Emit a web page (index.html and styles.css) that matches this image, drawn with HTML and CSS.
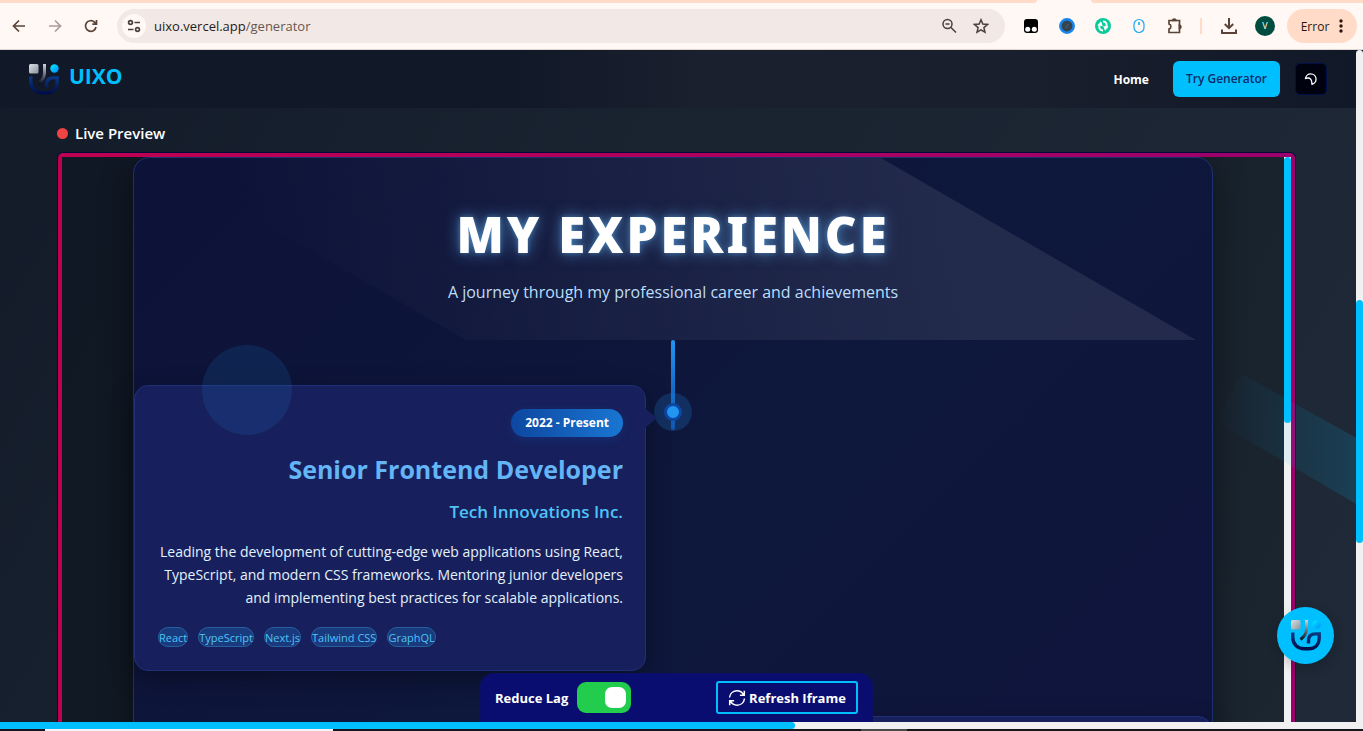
FILE: index.html
```html
<!DOCTYPE html>
<html lang="en">
<head>
<meta charset="utf-8">
<title>UIXO Generator</title>
<link rel="stylesheet" href="styles.css">
</head>
<body>
<svg class="defs" aria-hidden="true">
  <defs>
    <linearGradient id="silver" x1="0" y1="0" x2="1" y2="1"><stop offset="0" stop-color="#dce0e4"/><stop offset="1" stop-color="#8b959e"/></linearGradient>
    <linearGradient id="stem" gradientUnits="userSpaceOnUse" x1="16" y1="0" x2="11" y2="20"><stop offset="0" stop-color="#d0d5da"/><stop offset="1" stop-color="#070d22"/></linearGradient>
    <linearGradient id="dot" x1="0" y1="0" x2="1" y2="1"><stop offset="0" stop-color="#00f0ff"/><stop offset="1" stop-color="#0088ff"/></linearGradient>
    <linearGradient id="cup" gradientUnits="userSpaceOnUse" x1="0" y1="12" x2="0" y2="30"><stop offset="0" stop-color="#0b3a86"/><stop offset="1" stop-color="#000b45"/></linearGradient>
    <symbol id="logo" viewBox="0 0 30 31">
      <rect width="9.5" height="9.5" rx="1.5" fill="url(#silver)"/>
      <path d="M15.5 0v9c0 4-2 7.500-6 10.500" fill="none" stroke="url(#stem)" stroke-width="3"/>
      <circle cx="25.500" cy="4.500" r="4.200" fill="url(#dot)"/>
      <path d="M1.800 12.500v5c0 7 5 11.300 11.500 11.300h4c7 0 10.900-4.500 10.900-11v-3.900h-3.700c-4.800 0-7 2.500-7 6.600v3" fill="none" stroke="url(#cup)" stroke-width="3.400"/>
    </symbol>
  </defs>
</svg>

<header class="browser">
  <div class="tabs"><span class="tabs-left"></span><span class="tabs-right"></span></div>
  <div class="toolbar">
    <button class="tool" aria-label="Back"><svg width="16" height="16" viewBox="0 0 16 16"><path d="M14 8H3M8 2.500 2.500 8 8 13.500"/></svg></button>
    <button class="tool faded" aria-label="Forward"><svg width="16" height="16" viewBox="0 0 16 16"><path d="M2 8h11M8 2.500 13.500 8 8 13.500"/></svg></button>
    <button class="tool" aria-label="Reload"><svg width="16" height="16" viewBox="0 0 16 16"><path d="M13 9a5.300 5.300 0 1 1-1.500-4.800L13.300 6M13.500 2v4.200H9.300"/></svg></button>
    <div class="address">
      <button class="site" aria-label="Site information"><svg width="14" height="14" viewBox="0 0 14 14"><circle cx="3.500" cy="3.500" r="1.900"/><path d="M7.500 3.500H13M1 10.500h5.500"/><circle cx="10.500" cy="10.500" r="1.900"/></svg></button>
      <span class="url">uixo.vercel.app<span class="path">/generator</span></span>
      <button class="inner" aria-label="Zoom"><svg width="16" height="16" viewBox="0 0 16 16"><circle cx="6.500" cy="6" r="4.500"/><path d="M10 9.500l5 5M4.500 6h4"/></svg></button>
      <button class="inner" aria-label="Bookmark"><svg width="16" height="16" viewBox="0 0 16 16"><path d="M8 1.800l1.800 4.300 4.700.4-3.600 3.100 1.100 4.600L8 11.800l-4 2.400 1.100-4.600L1.500 6.500l4.700-.4z"/></svg></button>
    </div>
    <button class="tool" aria-label="Tampermonkey"><svg width="16" height="16" viewBox="0 0 16 16"><rect x="1" y="1" width="14" height="14" rx="3" fill="#000" stroke="none"/><circle cx="4.700" cy="11.300" r="2.500" fill="#fff" stroke="none"/><circle cx="11.300" cy="11.300" r="2.500" fill="#fff" stroke="none"/></svg></button>
    <button class="tool" aria-label="Lens"><svg width="16" height="16" viewBox="0 0 16 16"><circle cx="8" cy="8" r="6.700" fill="#34434f" stroke="#1685f0" stroke-width="2.500"/><path d="M6.500 10l3-4" stroke="#465763"/></svg></button>
    <button class="tool" aria-label="Sync"><svg width="16" height="16" viewBox="0 0 16 16"><circle cx="8" cy="8" r="8" fill="#0bcb9a" stroke="none"/><path d="M8 12.500C4.500 12.500 3.700 9.500 4.700 6.500M8 3.500c3.500 0 4.300 3 3.300 6" stroke="#fff" stroke-width="2"/><path d="M2.300 7.500 6 3.200l1.800 4.800zM13.700 8.500 10 12.800 8.200 8z" fill="#fff" stroke="none"/></svg></button>
    <button class="tool" aria-label="Mouse"><svg width="16" height="16" viewBox="0 0 16 16"><rect x="3" y="1.500" width="10" height="13" rx="5" stroke="#1ba8f5" stroke-width="1.200"/><path d="M8 4v3" stroke="#1ba8f5"/></svg></button>
    <button class="tool" aria-label="Extensions"><svg width="18" height="18" viewBox="0 0 18 18"><path d="M3 3.500h10.500v12H3V12c2.500-.5 2.500-4.500 0-5z"/><path d="M6.500 3.500a1.800 1.800 0 0 1 3.500 0zM13.500 8a1.800 1.800 0 0 1 0 3.500z" fill="#5a4337"/></svg></button>
    <span class="divider"></span>
    <button class="tool" aria-label="Downloads"><svg width="18" height="18" viewBox="0 0 18 18"><path d="M9 1v10M4.800 7 9 11.200 13.200 7M2 12.500V16h14v-3.500" stroke-width="2"/></svg></button>
    <button class="tool" aria-label="Profile"><span class="avatar">V</span></button>
    <button class="error">Error <svg width="4" height="16" viewBox="0 0 4 16"><circle cx="2" cy="3" r="1.700"/><circle cx="2" cy="8" r="1.700"/><circle cx="2" cy="13" r="1.700"/></svg></button>
  </div>
</header>

<div class="viewport">
  <div class="page">
    <nav class="navbar">
      <a class="brand" href="#"><svg width="30" height="31"><use href="#logo"/></svg><span>UIXO</span></a>
      <a class="home" href="#">Home</a>
      <a class="try" href="#">Try Generator</a>
      <button class="theme" aria-label="Toggle theme"><svg width="14" height="14" viewBox="0 0 14 14"><path d="M1.500 6.500A5.300 5.300 0 1 1 8 12.300L7.700 9.700C7.500 7.500 6 5.800 4 6z"/></svg></button>
    </nav>
    <main class="main">
      <h2 class="live"><span class="live-dot"></span>Live Preview</h2>
      <section class="frame">
        <div class="canvas">
          <article class="experience">
            <header class="hero">
              <h1>MY EXPERIENCE</h1>
              <p>A journey through my professional career and achievements</p>
            </header>
            <div class="timeline">
              <span class="line"></span><span class="node"></span>
              <section class="job">
                <span class="date">2022 - Present</span>
                <h3>Senior Frontend Developer</h3>
                <h4>Tech Innovations Inc.</h4>
                <p>Leading the development of cutting-edge web applications using React, TypeScript, and modern CSS frameworks. Mentoring junior developers and implementing best practices for scalable applications.</p>
                <ul class="tags"><li>React</li><li>TypeScript</li><li>Next.js</li><li>Tailwind CSS</li><li>GraphQL</li></ul>
              </section>
              <section class="job next"></section>
              <span class="bubble"></span>
            </div>
          </article>
        </div>
        <div class="inner-scroll"><span></span></div>
      </section>
    </main>
    <div class="beam"></div>
    <div class="controls">
      <label for="lag">Reduce Lag</label>
      <input class="switch" id="lag" type="checkbox" role="switch" checked>
      <button class="refresh"><svg width="18" height="18" viewBox="0 0 18 18"><path d="M1.500 8.500C2 4 5.500 1.800 9 1.800c3 0 5.200 1.500 6.700 4M16.300 1.800v4.400h-4.400M16.500 9.500c-.5 4.500-4 6.700-7.500 6.700-3 0-5.200-1.500-6.700-4M1.700 16.200v-4.400h4.400"/></svg>Refresh Iframe</button>
    </div>
    <button class="fab" aria-label="Open assistant"><svg width="30" height="31"><use href="#logo"/></svg></button>
  </div>
  <div class="page-scroll"><span></span></div>
</div>
<div class="bottom-scroll"><span></span></div>
<div class="edge"><span class="edge-light"></span><span class="edge-grey"></span></div>
</body>
</html>
```
FILE: styles.css
```css
* { box-sizing: border-box; }
html, body { height: 100%; }
body {
  margin: 0;
  display: flex;
  flex-direction: column;
  overflow: hidden;
  background: #111827;
  color: #fff;
  font-family: "Segoe UI", "Open Sans", "Noto Sans", sans-serif;
}
button { padding: 0; border: 0; background: none; font: inherit; color: inherit; cursor: pointer; }
a { color: inherit; text-decoration: none; }
h1, h2, h3, h4, p, ul { margin: 0; padding: 0; }
svg { display: block; flex: none; }
.defs { position: absolute; width: 0; height: 0; }

/* Browser chrome */
.browser { flex: none; background: #fff8f4; border-bottom: 1px solid #e3d6d0; }
.tabs { display: flex; gap: 54px; height: 3px; }
.tabs span { background: #ffdbc8; }
.tabs-left { flex: 1037; border-bottom-right-radius: 3px; }
.tabs-right { flex: 272; border-bottom-left-radius: 3px; }
.toolbar { display: flex; align-items: center; height: 46px; padding: 0 6px 0 1px; }
.tool { display: flex; flex: none; align-items: center; justify-content: center; width: 36px; height: 34px; }
.toolbar svg { fill: none; stroke: #5a4337; stroke-width: 1.7; }
.tool.faded { opacity: .5; }
.address { display: flex; flex: 1; align-items: center; height: 34px; margin: 0 8px; padding: 0 8px 0 5px; border-radius: 17px; background: #f2e8e5; }
.site { display: flex; align-items: center; justify-content: center; width: 24px; height: 24px; border-radius: 50%; background: #fff8f4; }
.site svg, .inner svg { stroke: #4a403c; }
.url { flex: 1; margin-left: 8px; color: #241c19; font-size: 13px; }
.path { color: #66574f; }
.inner { display: flex; align-items: center; justify-content: center; width: 32px; height: 32px; }
.inner svg { stroke-width: 1.5; }
.divider { width: 2px; height: 16px; margin: 0 9px 0 7px; background: #ffdbc8; }
.avatar { width: 20px; height: 20px; border-radius: 50%; background: #004d40; color: #fff; font-size: 9px; line-height: 20px; text-align: center; }
.error { display: flex; align-items: center; justify-content: center; gap: 10px; width: 70px; height: 34px; margin-left: 4px; border-radius: 17px; background: #ffdbc8; color: #2b1710; font-size: 12px; }
.toolbar .error svg { fill: #2b1710; stroke: none; }

/* Page */
.viewport { display: flex; flex: 1; min-height: 0; }
.page { position: relative; display: flex; flex: 1; flex-direction: column; min-width: 0; overflow: hidden; background: linear-gradient(120deg, #131b29, #1a2431 45%, #1f2937); }
.navbar { display: flex; flex: none; align-items: center; height: 58px; padding: 0 29px; background: linear-gradient(90deg, #111827 38%, #1a202e 52%, #191f2d 75%, #111827); }
.brand { display: flex; align-items: center; gap: 10px; margin-right: auto; color: #00bfff; font-size: 21px; font-weight: 700; line-height: 26px; }
.brand span { padding-bottom: 6px; }
.home { margin-right: 24px; font-size: 12px; font-weight: 700; }
.try { height: 36px; padding: 0 13px; border-radius: 6px; background: #00bfff; color: #0b2a66; font-size: 12px; font-weight: 600; line-height: 36px; }
.theme { display: flex; align-items: center; justify-content: center; width: 32px; height: 32px; margin-left: 15px; border: 1px solid #02104a; border-radius: 5px; background: #00020f; }
.theme svg { fill: none; stroke: #fff; stroke-width: 1.3; }

.main { display: flex; flex: 1; flex-direction: column; min-height: 0; padding: 13px 60px 0 57px; }
.live { display: flex; align-items: center; gap: 7px; height: 24px; margin-bottom: 7px; font-size: 15px; font-weight: 600; }
.live-dot { width: 11px; height: 11px; border-radius: 50%; background: #ef4444; }
.frame {
  display: flex; flex: 1; min-height: 0; overflow: hidden;
  padding: 4px 4px 0; border: 1px solid #020b3c; border-bottom: 0; border-radius: 6px 6px 0 0;
  background: linear-gradient(90deg, #bf0050, #9c006c);
}
.canvas { display: flex; flex: 1; justify-content: center; align-items: flex-start; min-width: 0; overflow: hidden; background: linear-gradient(115deg, #101825, #121a24 35%, #1b2631); }
.inner-scroll, .page-scroll { flex: none; width: 7px; background: #f1f1f1; }
.inner-scroll span { display: block; height: 47%; border-radius: 4px; background: #00bfff; }
.page-scroll { padding-top: 250px; border-radius: 4px 4px 0 0; }
.page-scroll span { display: block; height: 243px; border-radius: 4px; background: #00bfff; }

.experience { flex: 0 1 1080px; border: 1px solid #1c3270; border-radius: 16px; background: linear-gradient(135deg, #0d1238, #0e173c 50%, #10143c); box-shadow: 0 8px 32px rgba(0, 0, 0, .45); }
.hero { position: relative; height: 182px; padding: 40px 20px 0; overflow: hidden; border-radius: 16px 16px 0 0; text-align: center; }
.hero::before { content: ""; position: absolute; inset: 0; background: linear-gradient(75deg, transparent 12%, rgba(255, 255, 255, .085) 75%); clip-path: polygon(1.6% 0, 69.3% 0, 98.5% 100%, 30.8% 100%); }
.hero h1 { position: relative; font-family: "Segoe UI", "Noto Sans", "Open Sans", sans-serif; font-size: 49px; font-weight: 900; line-height: 72px; letter-spacing: 3px; text-shadow: 0 0 5px rgba(100, 181, 246, .45), 0 0 15px rgba(100, 181, 246, .6); }
.hero p { position: relative; margin-top: 8px; color: #bbdefb; font-size: 16px; line-height: 28px; }
.timeline { position: relative; height: 600px; padding-top: 45px; }
.line { position: absolute; top: 0; left: 50%; width: 4px; height: 90px; margin-left: -2px; border-radius: 2px; background: linear-gradient(#2196f3, #0d47a1); }
.node { position: absolute; top: 63px; left: 50%; width: 18px; height: 18px; margin-left: -9px; border: 3px solid #0d47a1; border-radius: 50%; background: #2196f3; box-shadow: 0 0 0 10px rgba(33, 150, 243, .2); }
.job { position: relative; width: 512px; padding: 23px 22px 23px 23px; border: 1px solid #203078; border-radius: 14px; background: #17205c; box-shadow: 0 8px 24px rgba(0, 0, 0, .35); text-align: right; }
.job::after { content: ""; position: absolute; top: 22px; left: 100%; border: 10px solid transparent; border-left: 12px solid #17205c; border-right-width: 0; }
.date { display: inline-block; height: 28px; padding: 0 14px; border-radius: 14px; background: linear-gradient(90deg, #0d47a1, #1976d2); box-shadow: 0 3px 8px rgba(13, 71, 161, .3); font-size: 12px; font-weight: 700; line-height: 28px; vertical-align: top; }
.job h3 { margin-top: 15px; color: #64b5f6; font-size: 25px; font-weight: 700; line-height: 34px; }
.job h4 { margin-top: 14px; color: #4fc3f7; font-size: 17px; font-weight: 600; line-height: 24px; }
.job p { margin-top: 16px; color: #e3f2fd; font-size: 14px; line-height: 23px; }
.tags { display: flex; gap: 10px; margin-top: 18px; list-style: none; }
.tags li { height: 20px; border: 1px solid #285fa0; border-radius: 10px; background: #193a7c; color: #4fc3f7; font-size: 11px; line-height: 19px; }
.job.next { height: 285px; margin: 45px 0 0 auto; }
.bubble { position: absolute; top: 5px; left: 68px; width: 90px; height: 90px; border-radius: 50%; background: rgba(33, 150, 243, .13); }

/* Overlays */
.beam { position: absolute; right: 0; top: 324px; width: 139px; height: 130px; background: linear-gradient(90deg, rgba(0, 191, 255, 0), rgba(0, 191, 255, .15)); clip-path: polygon(0 37%, 18% 0, 100% 49%, 100% 100%); }
.controls { position: absolute; bottom: 0; left: 480px; display: flex; align-items: center; width: 393px; height: 49px; padding: 0 14px 1px; border: 1px solid #0b1066; border-bottom: 0; border-radius: 14px 14px 0 0; background: #0a0d70; font-size: 13px; font-weight: 700; }
.switch { position: relative; width: 54px; height: 31px; margin: 0 0 0 9px; border-radius: 9px; background: #22cc4c; appearance: none; cursor: pointer; }
.switch::after { content: ""; position: absolute; top: 5px; right: 5px; width: 21px; height: 21px; border-radius: 7px; background: #fff; }
.refresh { display: flex; align-items: center; justify-content: center; gap: 3px; width: 142px; height: 33px; margin-left: auto; border: 2px solid #00bfff; border-radius: 3px; }
.refresh svg { fill: none; stroke: #fff; stroke-width: 1.5; }
.fab { position: absolute; right: 22px; bottom: 58px; display: flex; align-items: center; justify-content: center; width: 57px; height: 57px; border-radius: 50%; background: #00bfff; box-shadow: 0 4px 12px rgba(0, 0, 0, .2); }

.bottom-scroll { flex: none; height: 7px; background: #f1f1f1; }
.bottom-scroll span { display: block; width: 58.3%; height: 7px; border-radius: 0 4px 4px 0; background: #00bfff; }
.edge { display: flex; flex: none; height: 2px; padding: 0 456px 0 45px; justify-content: space-between; background: #17141a; }
.edge-light { width: 288px; background: #f4f4f4; }
.edge-grey { width: 46px; background: #4a4a4c; }
```
